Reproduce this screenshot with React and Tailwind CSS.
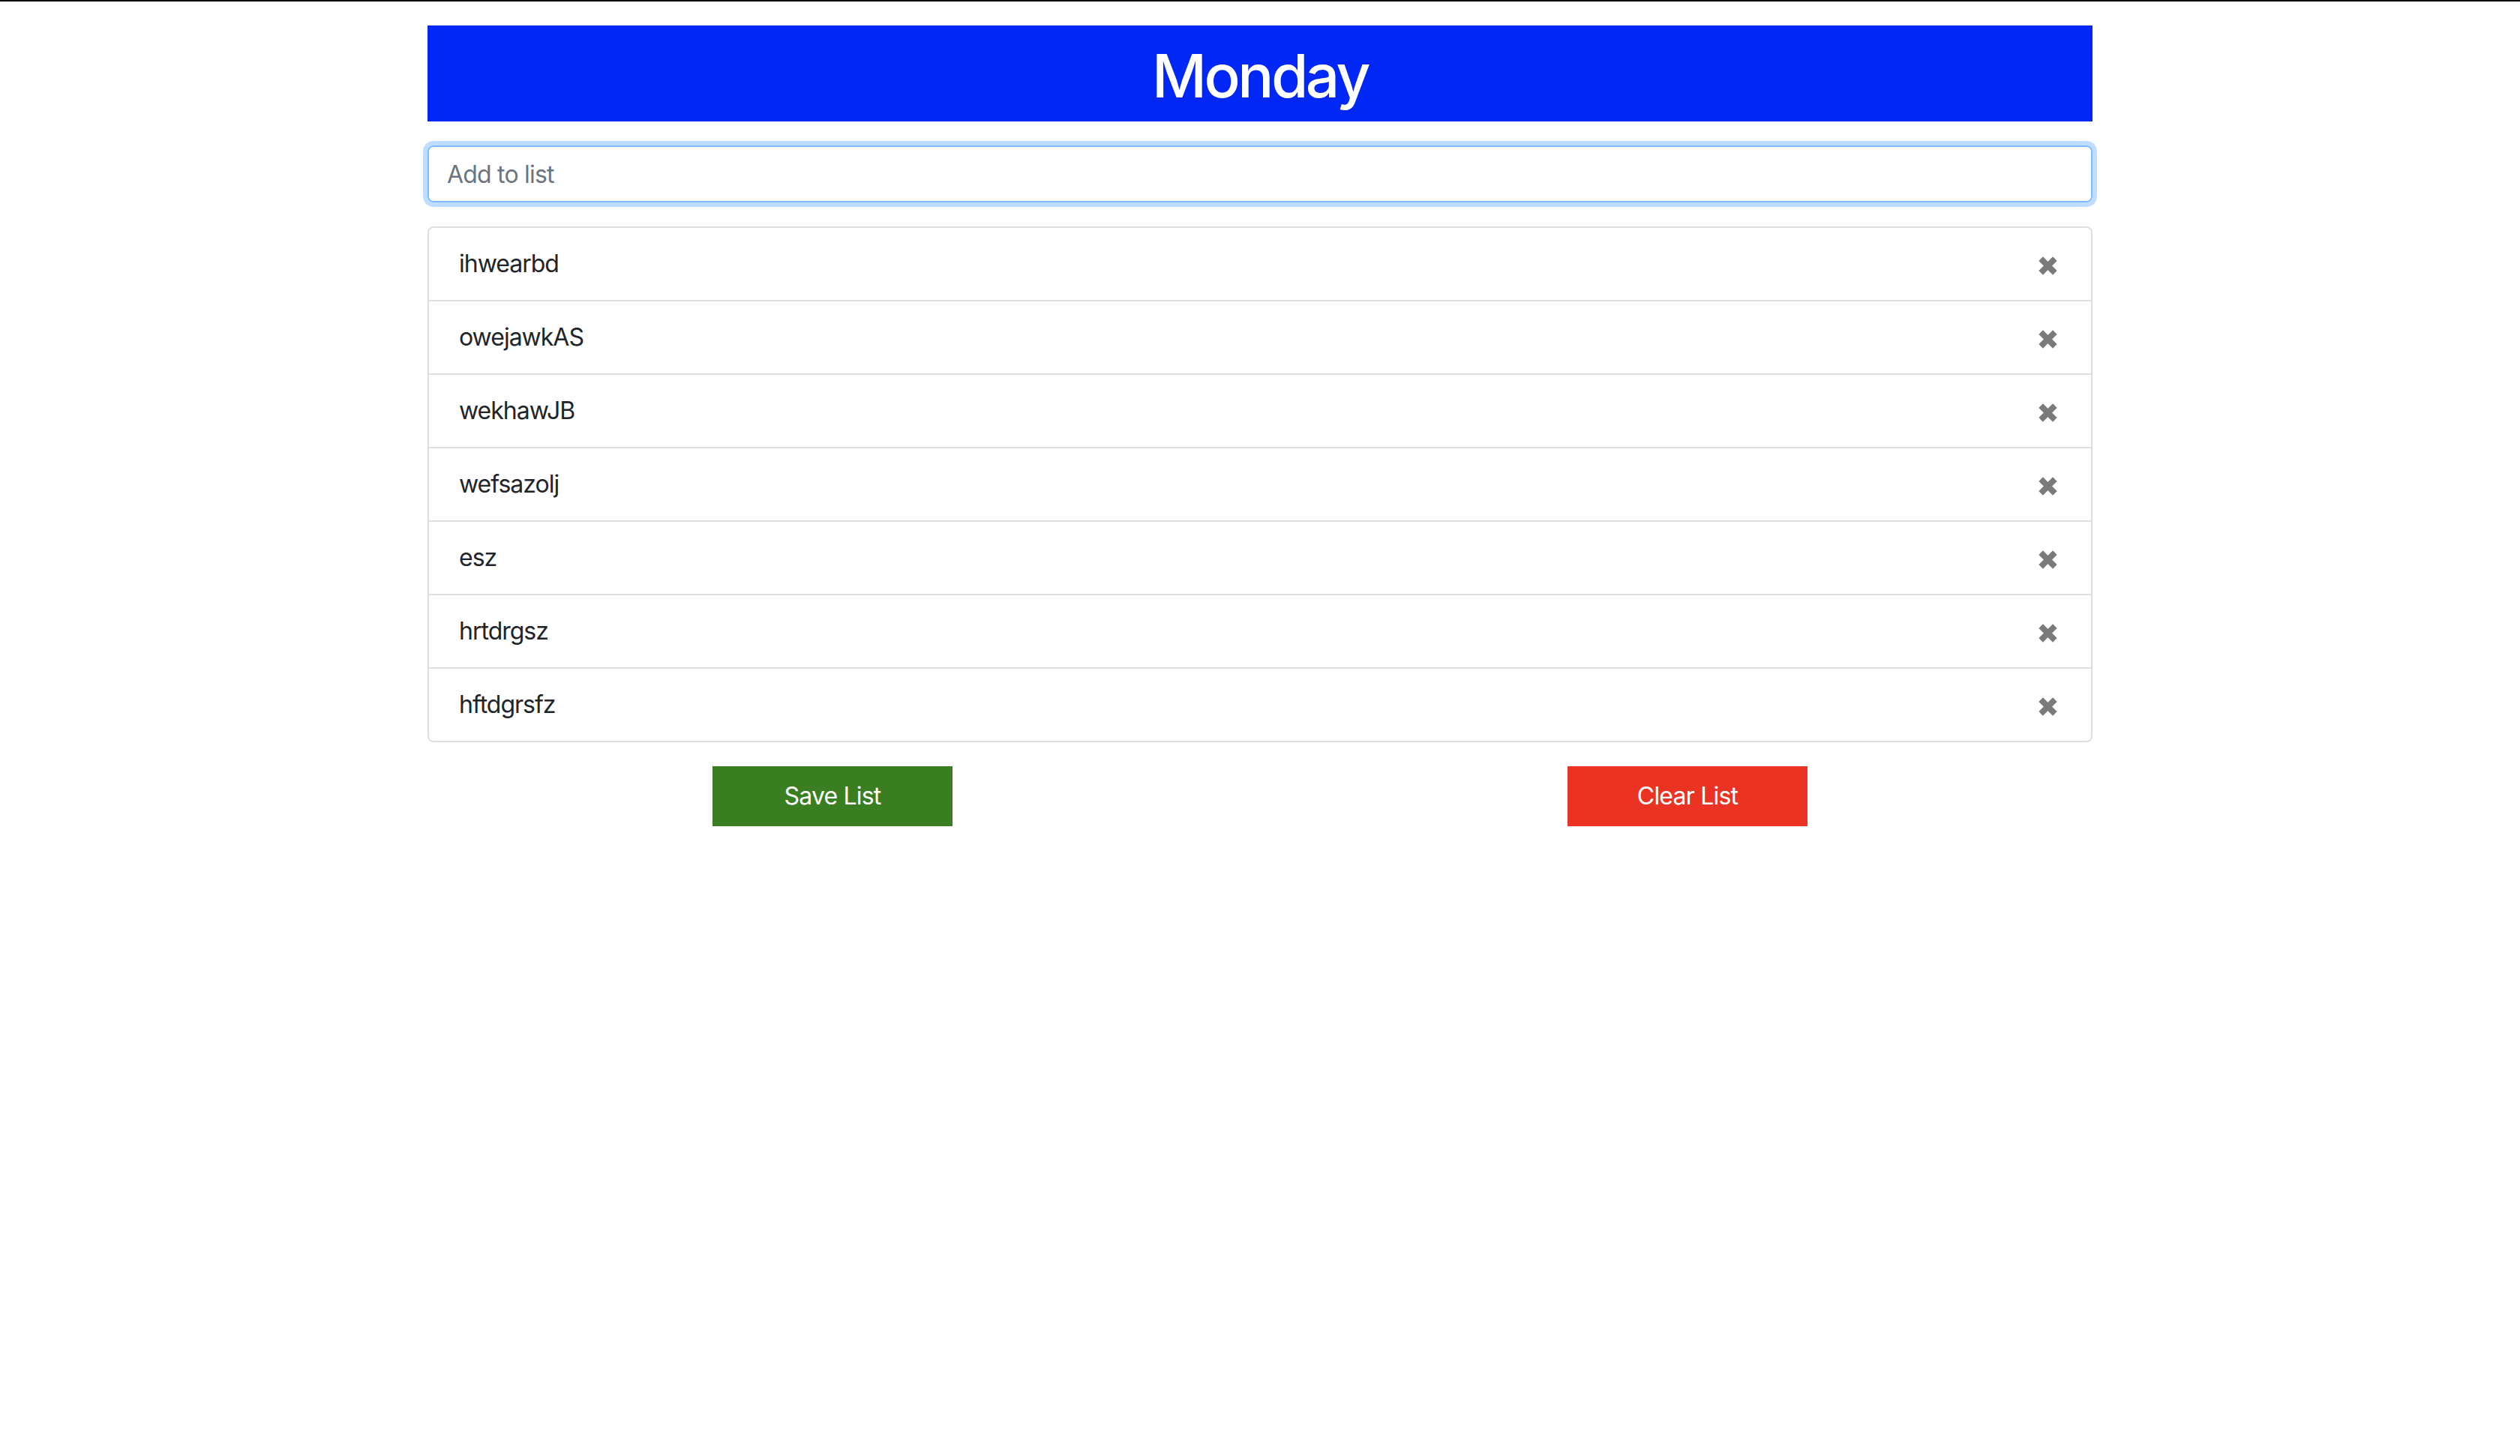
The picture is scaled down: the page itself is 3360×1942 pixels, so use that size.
import { useState } from 'react';

const ITEMS = ['ihwearbd', 'owejawkAS', 'wekhawJB', 'wefsazolj', 'esz', 'hrtdrgsz', 'hftdgrsfz'];

const TimesIcon = () => (
  <svg width="25" height="25" viewBox="0 0 24 24" className="block">
    <line x1="3" y1="3" x2="21" y2="21" stroke="#7a7a7a" strokeWidth="7.5" />
    <line x1="21" y1="3" x2="3" y2="21" stroke="#7a7a7a" strokeWidth="7.5" />
  </svg>
);

const App = () => {
  const [items, setItems] = useState(ITEMS);
  const [text, setText] = useState('');

  const handleKeyDown = (e) => {
    if (e.key === 'Enter' && text.trim()) {
      setItems([...items, text.trim()]);
      setText('');
    }
  };

  return (
    <div className="min-h-screen border-t-2 border-black bg-white font-['Inter','Liberation_Sans',sans-serif] text-[#212529]">
      <div className="w-[2220px] mx-auto pt-8">
        {/* Day header */}
        <h1 className="bg-[#0027f5] text-white text-center text-[80px] leading-[128px] h-[128px] pt-[3px] font-medium tracking-[-3.5px]">
          Monday
        </h1>

        <input
          type="text"
          value={text}
          onChange={(e) => setText(e.target.value)}
          onKeyDown={handleKeyDown}
          placeholder="Add to list"
          className="mt-8 block w-full h-[76px] px-[24px] text-[32px] tracking-[-0.8px] border-2 border-[#80bdff] rounded-lg outline-none shadow-[0_0_0_6px_rgba(0,123,255,0.25)] placeholder:text-[#6c757d]"
        />

        <ul className="mt-8 border-2 border-[#dfdfdf] rounded-lg">
          {items.map((item, i) => (
            <li
              key={i}
              className={`flex items-center justify-between px-[40px] py-[24px] text-[32px] leading-[48px] tracking-[-1px] ${i > 0 ? 'border-t-2 border-[#dfdfdf]' : ''}`}
            >
              <span>{item}</span>
              <button
                className="mr-[5px] mt-[5px]"
                onClick={() => setItems(items.filter((_, j) => j !== i))}
              >
                <TimesIcon />
              </button>
            </li>
          ))}
        </ul>

        <div className="mt-8 grid grid-cols-2 gap-[60px]">
          <div className="flex justify-center">
            <button className="w-[320px] h-[80px] bg-[#3a7e22] text-white text-[32px] tracking-[-0.8px]">
              Save List
            </button>
          </div>
          <div className="flex justify-center">
            <button
              className="w-[320px] h-[80px] bg-[#ea3323] text-white text-[32px] tracking-[-0.8px]"
              onClick={() => setItems([])}
            >
              Clear List
            </button>
          </div>
        </div>
      </div>
    </div>
  );
};

export default App;
